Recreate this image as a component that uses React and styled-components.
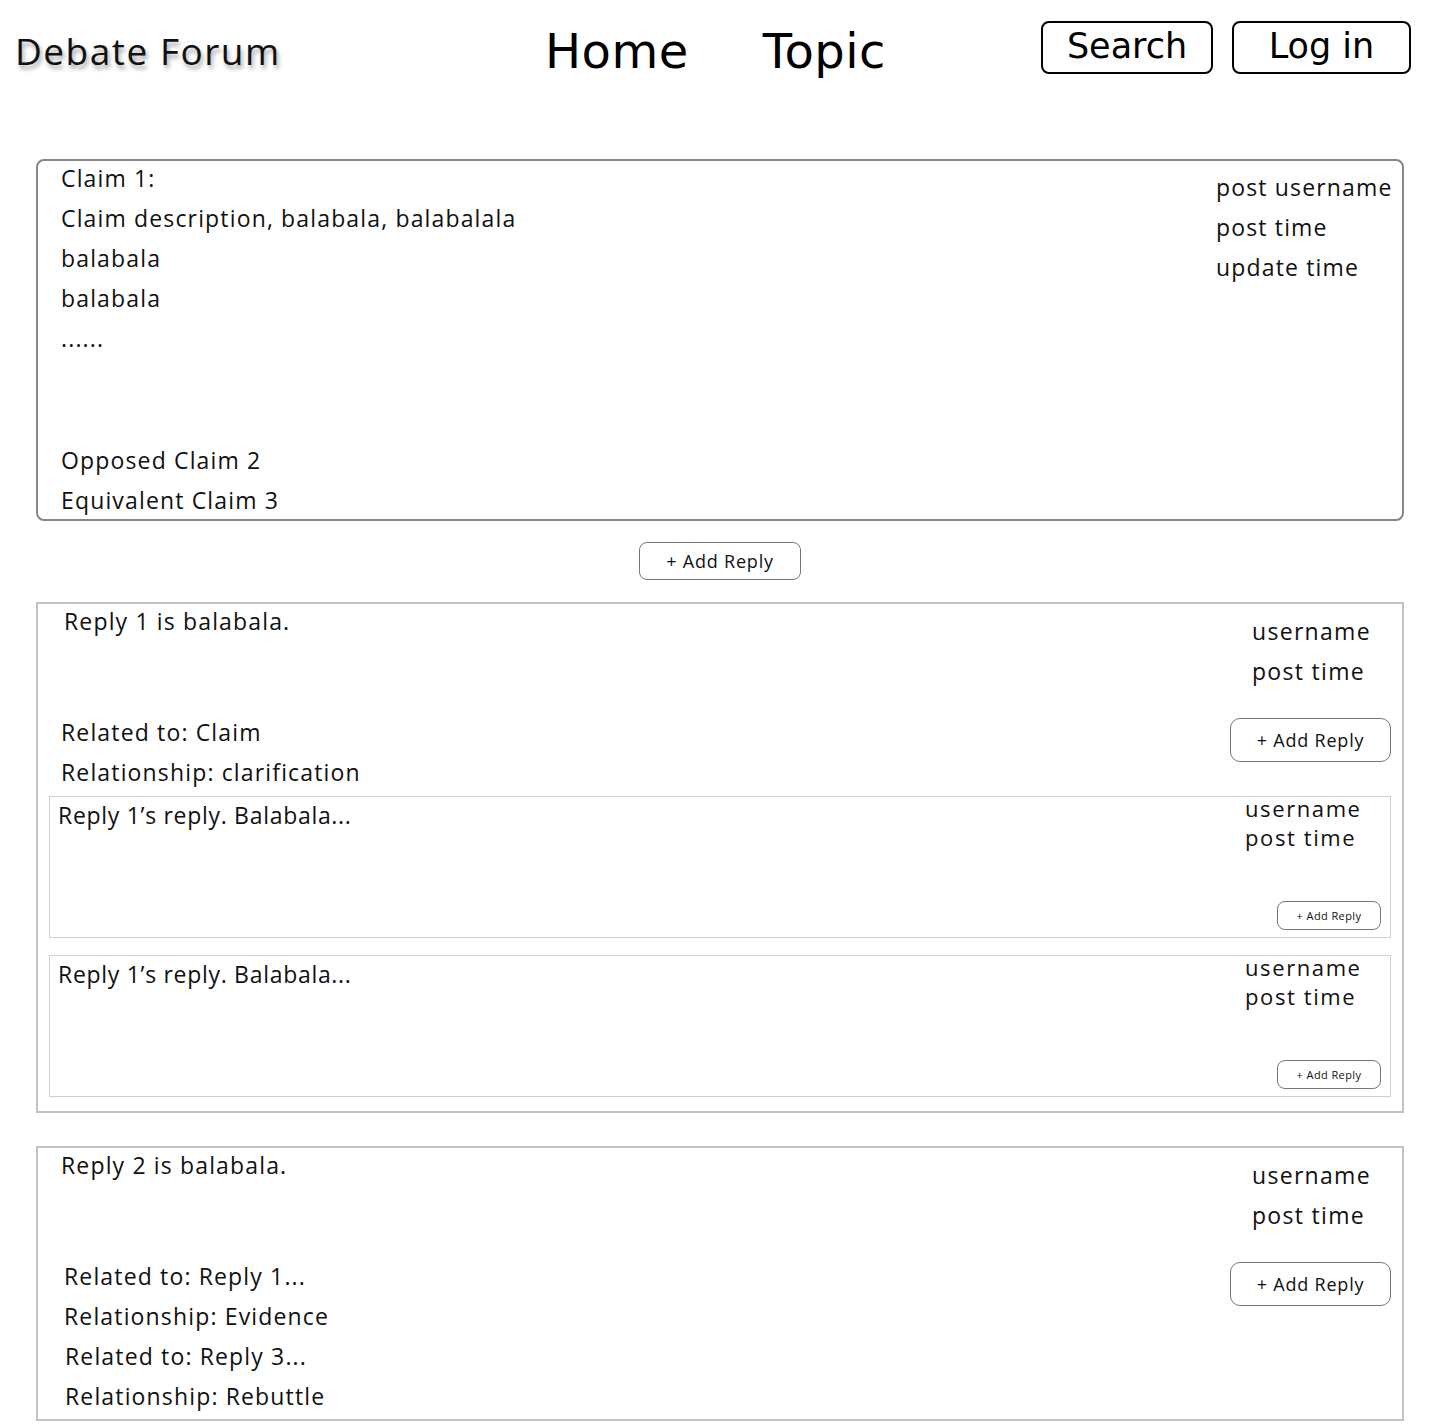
import React from "react";
import styled, { createGlobalStyle } from "styled-components";

const Global = createGlobalStyle`
  html, body { margin: 0; padding: 0; background: #fff; }
  body { font-family: "Open Sans", "Liberation Sans", sans-serif; color: #111; }
  * { box-sizing: border-box; }
`;

const Page = styled.div`
  width: 1440px;
  min-height: 1424px;
  padding: 0 36px 0 36px;
`;

const TopBar = styled.header`
  display: flex;
  align-items: center;
  height: 100px;
  margin: 0 -36px;
  padding: 0 29px 0 15px;
`;

const Brand = styled.div`
  font-family: "Open Sans", sans-serif;
  font-size: 37px;
  letter-spacing: 1.5px;
  color: #111;
  text-shadow: 2px 4px 4px rgba(0,0,0,0.35);
  width: 530px;
  white-space: nowrap;
`;

const Nav = styled.nav`
  display: flex;
  gap: 74px;
  flex: 1;
  padding-top: 2px;
`;

const NavLink = styled.a`
  font-family: "DejaVu Sans", sans-serif;
  font-size: 48px;
  letter-spacing: 0.5px;
  color: #000;
  text-decoration: none;
`;

const Actions = styled.div`
  display: flex;
  gap: 19px;
  margin-top: -6px;
`;

const HeadButton = styled.button`
  font-family: "DejaVu Sans", sans-serif;
  font-size: 35px;
  height: 53px;
  width: ${p => p.$w}px;
  background: #fff;
  border: 2px solid #000;
  border-radius: 8px;
  color: #000;
  padding: 0 0 1px;
  line-height: 1;
`;

const ClaimCard = styled.section`
  margin-top: 59px;
  border: 2px solid #888;
  border-radius: 8px;
  display: flex;
  justify-content: space-between;
  height: 362px;
  overflow: hidden;
`;

const Col = styled.div`
  display: flex;
  flex-direction: column;
  padding-left: ${p => p.$pl || 0}px;
  padding-top: ${p => p.$pt || 0}px;
  width: ${p => (p.$w ? p.$w + "px" : "auto")};
  flex: ${p => (p.$grow ? 1 : "none")};
`;

const Line = styled.div`
  font-size: 23px;
  line-height: 34px;
  height: 40px;
  flex: none;
  white-space: nowrap;
  margin-left: ${p => p.$ml || 0}px;
  letter-spacing: 1.15px;
`;

const Spacer = styled.div`
  height: ${p => p.$h}px;
  flex: none;
`;

const Center = styled.div`
  display: flex;
  justify-content: center;
  padding: 21px 0 22px;
`;

const AddReply = styled.button`
  font-family: "Open Sans", sans-serif;
  font-size: ${p => p.$fs}px;
  width: ${p => p.$w}px;
  height: ${p => p.$h}px;
  background: #fff;
  border: 1px solid #777;
  border-radius: ${p => p.$r}px;
  color: #111;
  padding: 0 0 1px;
  letter-spacing: ${p => p.$ls || 0.8}px;
`;

const ReplyCard = styled.section`
  border: 2px solid #c2c2c2;
  margin-bottom: ${p => p.$mb || 0}px;
  padding: 0 11px ${p => p.$pb || 0}px 11px;
`;

const ReplyHead = styled.div`
  display: flex;
  justify-content: space-between;
`;

const MetaCol = styled.div`
  display: flex;
  flex-direction: column;
  align-items: flex-start;
  width: 161px;
  padding-top: ${p => p.$pt}px;
`;

const MetaText = styled.div`
  font-size: 23px;
  line-height: 34px;
  height: 40px;
  padding-left: 22px;
  letter-spacing: 1.3px;
  white-space: nowrap;
`;

const SubReply = styled.div`
  border: 1px solid #cfcfcf;
  height: 142px;
  margin-top: ${p => p.$mt}px;
  display: flex;
  justify-content: space-between;
  padding: 0 9px 7px 8px;
`;

const SubText = styled.div`
  font-size: 23px;
  line-height: 36px;
  letter-spacing: 0.7px;
  white-space: nowrap;
`;

const SubMeta = styled.div`
  display: flex;
  flex-direction: column;
  align-items: flex-end;
  justify-content: space-between;
  width: 136px;
`;

const SubMetaBlock = styled.div`
  align-self: stretch;
`;

const SubMetaText = styled.div`
  font-size: 22px;
  line-height: 29px;
  height: 29px;
  letter-spacing: 1.6px;
  white-space: nowrap;
  margin-top: -3px;
  & + & { margin-top: 0; }
`;

function SubReplyBox({ mt }) {
  return (
    <SubReply $mt={mt}>
      <SubText>Reply 1’s reply. Balabala...</SubText>
      <SubMeta>
        <SubMetaBlock>
          <SubMetaText>username</SubMetaText>
          <SubMetaText>post time</SubMetaText>
        </SubMetaBlock>
        <AddReply $fs={11} $w={104} $h={29} $r={8} $ls={0.4}>+ Add Reply</AddReply>
      </SubMeta>
    </SubReply>
  );
}

export default function App() {
  return (
    <>
      <Global />
      <Page>
        <TopBar>
          <Brand>Debate Forum</Brand>
          <Nav>
            <NavLink>Home</NavLink>
            <NavLink>Topic</NavLink>
          </Nav>
          <Actions>
            <HeadButton $w={172}>Search</HeadButton>
            <HeadButton $w={179}>Log in</HeadButton>
          </Actions>
        </TopBar>

        <ClaimCard>
          <Col $pl={23} $grow>
            <Line>Claim 1:</Line>
            <Line>Claim description, balabala, balabalala</Line>
            <Line>balabala</Line>
            <Line>balabala</Line>
            <Line>......</Line>
            <Spacer $h={82} />
            <Line>Opposed Claim 2</Line>
            <Line>Equivalent Claim 3</Line>
          </Col>
          <Col $w={186} $pt={9}>
            <Line>post username</Line>
            <Line>post time</Line>
            <Line>update time</Line>
          </Col>
        </ClaimCard>

        <Center>
          <AddReply $fs={18} $w={162} $h={38} $r={8}>+ Add Reply</AddReply>
        </Center>

        <ReplyCard $mb={33} $pb={14}>
          <ReplyHead>
            <Col $grow>
              <Line $ml={15}>Reply 1 is balabala.</Line>
              <Spacer $h={71} />
              <Line $ml={12}>Related to: Claim</Line>
              <Line $ml={12}>Relationship: clarification</Line>
            </Col>
            <MetaCol $pt={10}>
              <MetaText>username</MetaText>
              <MetaText>post time</MetaText>
              <Spacer $h={24} />
              <AddReply $fs={18} $w={161} $h={44} $r={10}>+ Add Reply</AddReply>
            </MetaCol>
          </ReplyHead>
          <SubReplyBox mt={1} />
          <SubReplyBox mt={17} />
        </ReplyCard>

        <ReplyCard>
          <ReplyHead>
            <Col $grow>
              <Line $ml={12}>Reply 2 is balabala.</Line>
              <Spacer $h={71} />
              <Line $ml={15}>Related to: Reply 1...</Line>
              <Line $ml={15}>Relationship: Evidence</Line>
              <Line $ml={16}>Related to: Reply 3...</Line>
              <Line $ml={16}>Relationship: Rebuttle</Line>
            </Col>
            <MetaCol $pt={10}>
              <MetaText>username</MetaText>
              <MetaText>post time</MetaText>
              <Spacer $h={24} />
              <AddReply $fs={18} $w={161} $h={44} $r={10}>+ Add Reply</AddReply>
            </MetaCol>
          </ReplyHead>
        </ReplyCard>
      </Page>
    </>
  );
}
